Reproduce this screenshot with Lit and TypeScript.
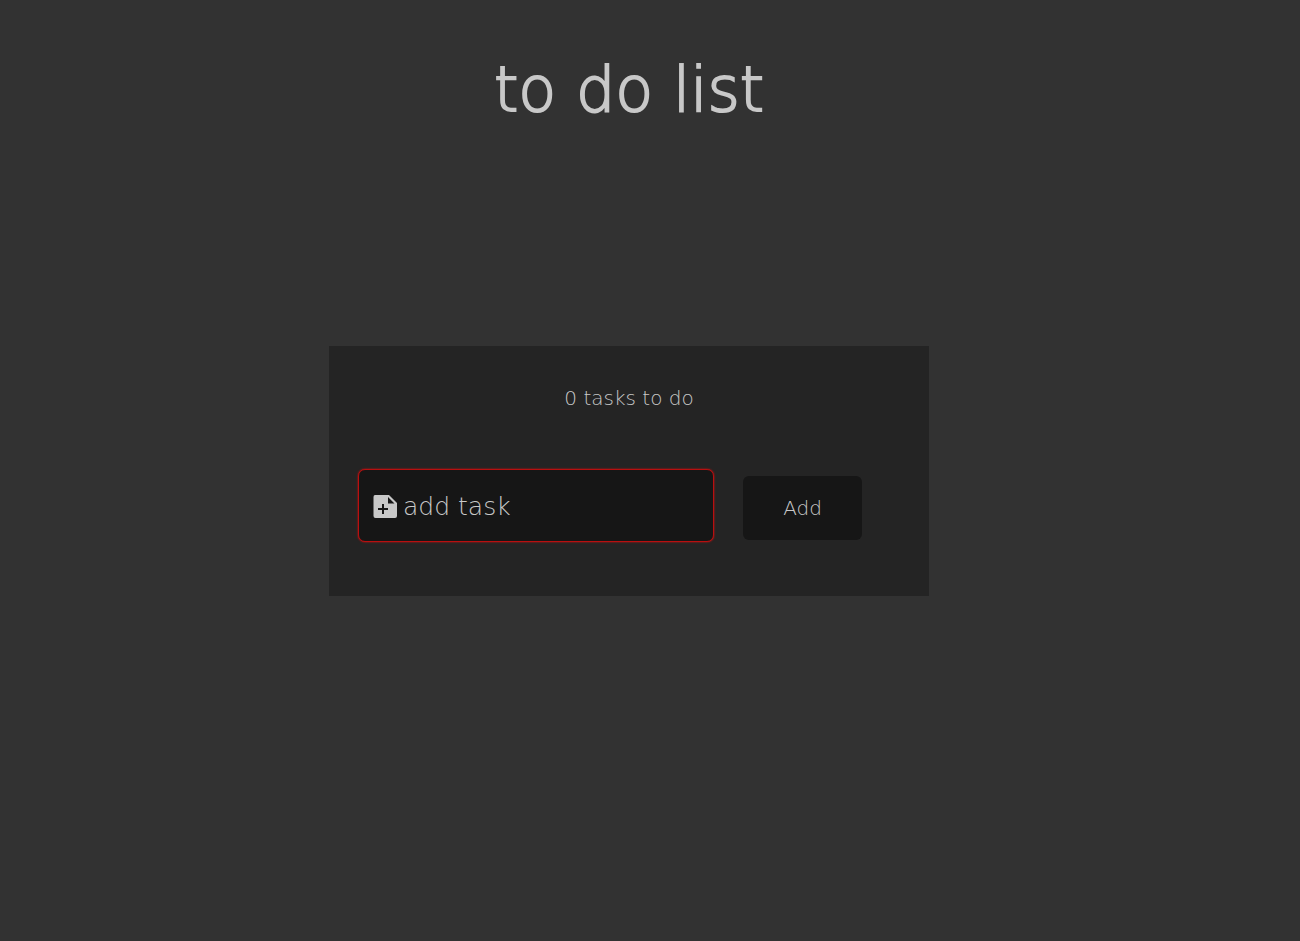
import { LitElement, html, css } from "lit";
import { customElement, state } from "lit/decorators.js";

@customElement("app-root")
export class AppRoot extends LitElement {
  static styles = css`
    :host {
      display: flex;
      flex-direction: column;
      align-items: center;
      box-sizing: border-box;
      min-height: 100vh;
      padding: 0 42px 0 0;
      background: #323232;
      color: #c8c8c8;
      font-family: "DejaVu Sans Light", "DejaVu Sans", sans-serif;
      font-weight: 200;
    }
    .title {
      margin: 52px 0 218px;
      font-size: 62px;
      line-height: 76px;
      font-weight: 700;
    }
    .card {
      box-sizing: border-box;
      width: 100%;
      max-width: 600px;
      padding: 40px 29px 54px;
      background: #242424;
    }
    .count {
      margin: 0 0 59px;
      font-size: 20px;
      line-height: 24px;
      text-align: center;
    }
    .form {
      display: flex;
      align-items: last baseline;
      gap: 29px;
    }
    .field {
      display: flex;
      align-items: center;
      gap: 4px;
      box-sizing: border-box;
      width: 356px;
      height: 73px;
      padding: 2px 12px 0;
      border: 1px solid #b90f0f;
      border-radius: 7px;
      background: #161616;
      box-shadow: 0 0 2px #e01010;
    }
    .icon {
      flex: none;
      width: 28px;
      height: 28px;
      fill: #c8c8c8;
    }
    .input {
      flex: 1;
      min-width: 0;
      padding: 0;
      border: 0;
      outline: 0;
      background: none;
      color: inherit;
      font: inherit;
      font-size: 25px;
    }
    .input::placeholder {
      color: #c8c8c8;
      opacity: 1;
    }
    .add {
      width: 119px;
      height: 64px;
      padding: 0;
      border: 0;
      border-radius: 6px;
      background: #161616;
      color: inherit;
      font: inherit;
      font-size: 20px;
    }
  `;

  @state() private tasks: string[] = [];

  private submit(e: Event) {
    e.preventDefault();
    const input = this.renderRoot.querySelector("input")!;
    const text = input.value.trim();
    if (text) this.tasks = [...this.tasks, text];
    input.value = "";
  }

  render() {
    return html`
      <h1 class="title">to do list</h1>
      <main class="card">
        <p class="count">${this.tasks.length} tasks to do</p>
        <form class="form" @submit=${this.submit}>
          <label class="field">
            <svg class="icon" viewBox="0 0 28 28" aria-hidden="true">
              <path fill-rule="evenodd" d="M4 2H18L26 10V23Q26 25 24 25H4.500Q2.500 25 2.500 23V4Q2.500 2 4 2ZM17 4V10.500H23.500ZM11 11V15H7V17H11V21H13V17H17V15H13V11Z" />
            </svg>
            <input class="input" type="text" placeholder="add task" aria-label="add task" />
          </label>
          <button class="add" type="submit">Add</button>
        </form>
      </main>
    `;
  }
}
